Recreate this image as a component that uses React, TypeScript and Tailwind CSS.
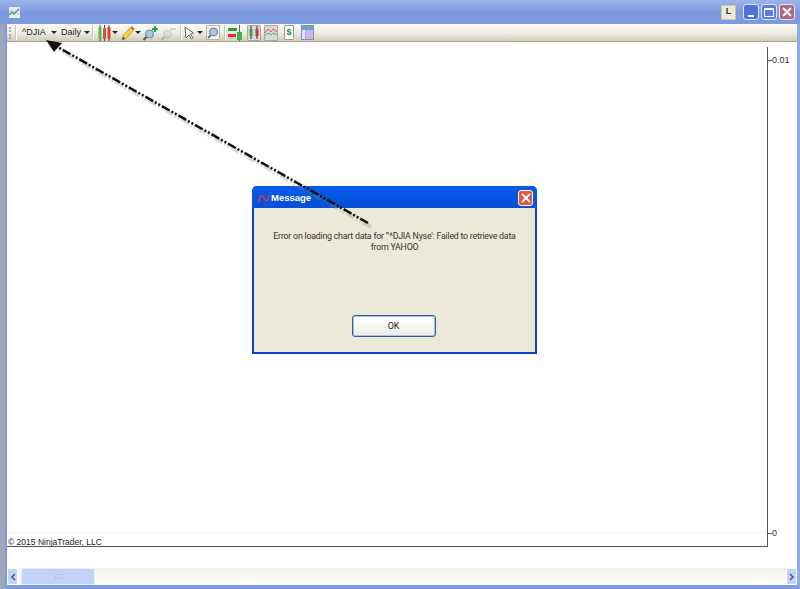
import React from 'react';

function Caret({ className = '' }: { className?: string }) {
  return <span className={`h-0 w-0 border-x-[3px] border-t-[3px] border-x-transparent border-t-[#222] ${className}`} />;
}

function Sep({ className = '' }: { className?: string }) {
  return <span className={`h-[15px] w-[2px] border-r border-white bg-[#c9c7b4] ${className}`} />;
}

function Candles() {
  return (
    <svg width="13" height="16" viewBox="0 0 13 16" className="ml-[4px]">
      <path d="M2 0v16M6.500 0v16M11 0v16" stroke="#555" />
      <rect x="0.500" y="2" width="3" height="12" rx="1" fill="#45c045" />
      <rect x="5" y="3" width="3" height="11" rx="1" fill="#c95050" />
      <rect x="9.500" y="2" width="3" height="12" rx="1" fill="#e03c3c" />
    </svg>
  );
}

function Pencil() {
  return (
    <svg width="14" height="16" viewBox="0 0 14 16" className="ml-[3px]">
      <path d="M1 15l1-4.500L9.500 2.500 12.500 5.500 5 13.500z" fill="#f1cf45" stroke="#b08a20" strokeWidth="0.700" />
      <path d="M9.500 2.500l3 3 1.200-1.500L11 1z" fill="#e0604e" />
      <path d="M1 15l1-3.500 2.200 2.200z" fill="#555" />
    </svg>
  );
}

function Zoom({ plus, faded, className = '' }: { plus?: boolean; faded?: boolean; className?: string }) {
  return (
    <svg width="15" height="16" viewBox="0 0 15 16" className={`${faded ? 'opacity-30' : ''} ${className}`}>
      <path d="M0.500 15l4-4" stroke="#555" strokeWidth="2" />
      <circle cx="6.500" cy="9" r="4" fill="#a8c6e4" stroke="#6f8298" />
      {plus ? <path d="M12 1v6M9 4h6" stroke="#22a83a" strokeWidth="2" /> : <path d="M9 4h6" stroke="#888" strokeWidth="2" />}
    </svg>
  );
}

function Cursor() {
  return (
    <svg width="11" height="14" viewBox="0 0 11 14" className="ml-[2px]">
      <path d="M1 1l8.500 6-3 1 2.500 4-1.500 1-2.500-4L2 12z" fill="#fff" stroke="#666" />
    </svg>
  );
}

function Tile({ children, className = '' }: { children: React.ReactNode; className?: string }) {
  return (
    <span className={`flex h-[16px] w-[14px] items-center justify-center rounded-[1px] border border-[#aaa89a] bg-[#d8d9dc] ${className}`}>
      {children}
    </span>
  );
}

function Toolbar() {
  return (
    <div className="flex h-[18px] items-center rounded-t-[2px] border-b border-[#a9a78e] bg-gradient-to-b from-[#fbfaf5] via-[#efeee3] to-[#cfcdb8] pl-[2px] font-['Liberation_Sans',sans-serif] text-[9px] text-[#222]">
      <span className="h-[12px] w-[2px] border-l-2 border-dotted border-[#aaa]" />
      <Sep className="ml-[4px]" />
      <span className="ml-[5px] w-[24px] whitespace-nowrap">^DJIA</span>
      <Caret className="ml-[5px]" />
      <span className="ml-[4px] w-[18px] whitespace-nowrap">Daily</span>
      <Caret className="ml-[5px]" />
      <Sep className="ml-[2px]" />
      <Candles />
      <Caret className="ml-[1px]" />
      <Pencil />
      <Caret />
      <Zoom plus className="ml-[2px]" />
      <Zoom faded className="ml-[3px]" />
      <Sep className="ml-[4px]" />
      <Cursor />
      <Caret className="ml-[2px]" />
      <span className="ml-[3px] flex h-[15px] w-[14px] items-center justify-center border border-[#b5b3a3] bg-[#f4f4ee]">
        <svg width="12" height="13" viewBox="0 0 12 13">
          <path d="M1 12l3-3" stroke="#555" strokeWidth="1.600" />
          <circle cx="6.500" cy="6" r="4" fill="#a9c8e8" stroke="#778" />
        </svg>
      </span>
      <Sep className="ml-[4px]" />
      <svg width="15" height="16" viewBox="0 0 15 16" className="ml-[2px]">
        <path d="M0 3h9v3H0z" fill="#2f9e3f" />
        <path d="M0 9h8v3H0z" fill="#d93232" />
        <path d="M11.500 0v16" stroke="#666" />
        <rect x="9" y="7" width="5" height="8" fill="#3cb24a" />
      </svg>
      <Tile className="ml-[4px]">
        <svg width="12" height="13" viewBox="0 0 12 13">
          <path d="M3 0v13M9 0v13" stroke="#333" />
          <rect x="1.500" y="3" width="3" height="7" fill="#2fa83c" />
          <rect x="7.500" y="3" width="3" height="7" fill="#d93232" />
        </svg>
      </Tile>
      <Tile className="ml-[3px]">
        <svg width="12" height="13" viewBox="0 0 12 13">
          <path d="M0 7l3-4 3 3 2-3 4 3" stroke="#d85a5a" fill="none" />
          <path d="M0 10l3-3 3 2 2-2 4 2" stroke="#55b268" fill="none" />
        </svg>
      </Tile>
      <span className="ml-[6px] flex h-[15px] w-[10px] items-center justify-center rounded-[1px] border border-[#999] bg-white text-[9px] font-bold leading-none text-[#1b8a3a]">
        $
      </span>
      <span className="ml-[7px] flex h-[15px] w-[13px] flex-col overflow-hidden border border-[#8290ab] bg-[#e8e0f6]">
        <span className="h-[4px] bg-[#6e9fd8]" />
        <span className="ml-[3px] flex-1 border-l border-[#b7a6dc] bg-[#c9b6ec]" />
      </span>
    </div>
  );
}

function WinButton({ children, className }: { children: React.ReactNode; className: string }) {
  return (
    <span className={`flex h-[16px] w-[16px] items-center justify-center rounded-[3px] border border-[#dfe6f8] ${className}`}>
      {children}
    </span>
  );
}

function TitleBar() {
  return (
    <div className="flex h-[24px] items-center bg-gradient-to-b from-[#9db5ea] via-[#7c99df] to-[#7f9be0] pl-[9px] pr-[5px]">
      <svg width="11" height="11" viewBox="0 0 11 11" className="mt-[1px]">
        <rect width="11" height="11" fill="#e9eef3" />
        <path d="M0 8l3-3 2 2 5-5" stroke="#2d9f49" strokeWidth="1.400" fill="none" />
        <path d="M0 4h11M0 7h11" stroke="#9fb2d0" strokeWidth="0.500" />
      </svg>
      <span className="ml-auto mr-[7px] flex h-[15px] w-[15px] items-center justify-center border border-[#cfc9a8] bg-[#ece9d8] font-['Liberation_Sans',sans-serif] text-[9px] font-bold text-[#333]">
        L
      </span>
      <span className="flex items-center gap-[2px]">
        <WinButton className="bg-[#4f71dc]">
          <span className="mt-[7px] h-[2px] w-[6px] bg-white" />
        </WinButton>
        <WinButton className="bg-[#5b7de0]">
          <span className="h-[9px] w-[10px] border border-t-2 border-white" />
        </WinButton>
        <WinButton className="bg-[#b2657e]">
          <svg width="10" height="10" viewBox="0 0 10 10">
            <path d="M1 1l8 8M9 1l-8 8" stroke="#fff" strokeWidth="2" />
          </svg>
        </WinButton>
      </span>
    </div>
  );
}

function Chart() {
  return (
    <div className="flex flex-1 bg-white font-['Liberation_Sans',sans-serif] text-[#333]">
      <div className="flex flex-1 flex-col pt-[5px]">
        <div className="flex flex-1">
          <div className="flex flex-1 flex-col justify-end border-b border-[#555]">
            <div className="h-[14px] whitespace-nowrap border-t border-[#f3f3ee] pl-[1px] text-[8.500px] leading-[19px] text-[#222]">
              © 2015 NinjaTrader, LLC
            </div>
          </div>
          <div className="w-[1px] bg-[#555]" />
        </div>
        <div className="h-[21px]" />
      </div>
      <div className="flex w-[29px] flex-col pb-[30px] pt-[13px] text-[9px] leading-[10px]">
        <div className="flex items-center">
          <span className="h-[1px] w-[4px] bg-[#555]" />
          0.01
        </div>
        <div className="mt-auto flex items-center">
          <span className="h-[1px] w-[4px] bg-[#555]" />
          0
        </div>
      </div>
    </div>
  );
}

function ScrollBar() {
  return (
    <div className="flex h-[17px] items-stretch bg-gradient-to-b from-[#f3f2ea] to-[#fdfdfb]">
      <span className="flex w-[11px] items-center justify-center rounded-[2px] border border-white bg-[#c2d3f7] text-[#4d6185]">
        <svg width="6" height="8" viewBox="0 0 6 8">
          <path d="M5 1L2 4l3 3" stroke="currentColor" strokeWidth="1.600" fill="none" />
        </svg>
      </span>
      <span className="ml-[3px] flex w-[74px] items-center justify-center rounded-[2px] border border-[#e6eefc] bg-[#c3d3f8]">
        <span className="h-[5px] w-[7px] border border-[#b3c6ee]" />
      </span>
      <span className="ml-auto flex w-[11px] items-center justify-center rounded-[2px] border border-white bg-[#c2d3f7] text-[#4d6185]">
        <svg width="6" height="8" viewBox="0 0 6 8">
          <path d="M1 1l3 3-3 3" stroke="currentColor" strokeWidth="1.600" fill="none" />
        </svg>
      </span>
    </div>
  );
}

function Dialog() {
  return (
    <div className="absolute left-[252px] top-[186px] flex h-[168px] w-[285px] flex-col rounded-t-[5px] bg-[#0a3ed0] font-['Liberation_Sans',sans-serif]">
      <div className="flex h-[22px] items-center rounded-t-[5px] bg-gradient-to-b from-[#0a5be8] via-[#0455e0] to-[#0a4fd8] pl-[6px] pr-[4px] pt-[2px]">
        <svg width="12" height="9" viewBox="0 0 12 9">
          <path d="M1 8C1 1 4 0 6 4s4 4 5-3" stroke="#d33c3c" strokeWidth="1.500" fill="none" />
        </svg>
        <span className="ml-[1px] text-[9.500px] font-bold text-white">Message</span>
        <span className="ml-auto flex h-[16px] w-[15px] items-center justify-center rounded-[3px] border border-white bg-[#e0583a]">
          <svg width="10" height="10" viewBox="0 0 10 10">
            <path d="M1 1l8 8M9 1l-8 8" stroke="#fff" strokeWidth="1.800" />
          </svg>
        </span>
      </div>
      <div className="mx-[2px] mb-[2px] flex flex-1 flex-col items-center bg-[#ece9d8] pt-[23px] text-center font-['Roboto',sans-serif] text-[8.800px] leading-[10.500px] tracking-[-0.22px] text-[#333]">
        <p className="whitespace-nowrap">
          Error on loading chart data for '"^DJIA Nyse': Failed to retrieve data
          <br />
          from YAHOO
        </p>
        <button className="mb-[15px] mr-[2px] mt-auto h-[22px] w-[84px] rounded-[3px] border border-[#2f5f9e] bg-gradient-to-b from-white to-[#eeede4] text-[9px] text-[#222] shadow-[inset_0_0_0_1px_#a8c2ea]">
          OK
        </button>
      </div>
    </div>
  );
}

function Arrow() {
  return (
    <svg className="absolute left-0 top-0" width="800" height="589" viewBox="0 0 800 589">
      <path d="M371 227L60 50" stroke="#888" strokeOpacity="0.300" strokeWidth="4" strokeDasharray="9 2 2 2 2 2" fill="none" />
      <path d="M368 223L56 46" stroke="#111" strokeWidth="2.500" strokeDasharray="9 2 2 2 2 2" fill="none" />
      <path d="M46 40L62 43L54 52z" fill="#111" />
    </svg>
  );
}

export default function App() {
  return (
    <div className="relative flex h-[589px] w-[800px] flex-col overflow-hidden bg-[#7f9be0]">
      <TitleBar />
      <div className="flex flex-1 bg-[#9fa6bb] pl-[5px]">
        <div className="flex flex-1 flex-col border-b-4 border-l-2 border-r-[3px] border-b-[#7f9be0] border-l-[#7f9be0] border-r-[#8fa8e6] bg-white">
          <Toolbar />
          <Chart />
          <ScrollBar />
        </div>
      </div>
      <Dialog />
      <Arrow />
    </div>
  );
}
